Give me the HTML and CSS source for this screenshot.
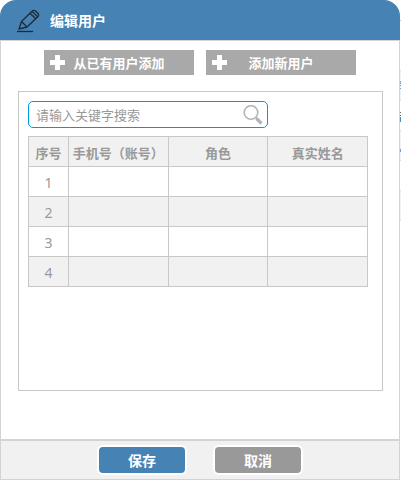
FILE: index.html
```html
<!DOCTYPE html>
<html lang="zh-CN">
<head>
<meta charset="utf-8">
<meta name="viewport" content="width=device-width, initial-scale=1">
<title>编辑用户</title>
<link rel="stylesheet" href="styles.css">
</head>
<body>
<form class="dialog" role="dialog" aria-labelledby="dialog-title">
  <header class="dialog-header">
    <svg class="pencil" viewBox="0 0 24 24" aria-hidden="true">
      <path d="M3 20 L5.500 12.500 L16.500 1.800 Q18 .8 19.500 2 L22 4.500 Q23.200 6 22 7.500 L11 18 Z M5.500 12.500 L11 18 M14 4.200 L19.700 9.700 M16 2.300 L21.600 7.900"/>
      <path d="M1 22.500 H17"/>
    </svg>
    <h1 id="dialog-title" class="dialog-title">编辑用户</h1>
  </header>
  <main class="dialog-body">
    <div class="add-actions">
      <button type="button" class="add-button">
        <svg class="plus" viewBox="0 0 15 15" aria-hidden="true"><path d="M5 0h5v5h5v5h-5v5H5v-5H0V5h5z"/></svg>
        <span class="add-label">从已有用户添加</span>
      </button>
      <button type="button" class="add-button">
        <svg class="plus" viewBox="0 0 15 15" aria-hidden="true"><path d="M5 0h5v5h5v5h-5v5H5v-5H0V5h5z"/></svg>
        <span class="add-label">添加新用户</span>
      </button>
    </div>
    <section class="panel">
      <div class="search">
        <input class="search-input" type="text" aria-label="请输入关键字搜索" placeholder="请输入关键字搜索">
        <button type="button" class="search-button" aria-label="搜索">
          <svg class="search-icon" viewBox="0 0 20 20" aria-hidden="true">
            <circle cx="8" cy="7.500" r="6.800"/>
            <path class="neck" d="M12.500 12 L14.500 14"/>
            <path class="handle" d="M13.500 13.500 L18.500 18.500"/>
          </svg>
        </button>
      </div>
      <table class="users">
        <colgroup><col class="col-index"><col><col><col></colgroup>
        <thead>
          <tr><th>序号</th><th>手机号（账号）</th><th>角色</th><th>真实姓名</th></tr>
        </thead>
        <tbody>
          <tr><td>1</td><td></td><td></td><td></td></tr>
          <tr><td>2</td><td></td><td></td><td></td></tr>
          <tr><td>3</td><td></td><td></td><td></td></tr>
          <tr><td>4</td><td></td><td></td><td></td></tr>
        </tbody>
      </table>
    </section>
  </main>
  <footer class="dialog-footer">
    <button type="button" class="button button-primary">保存</button>
    <button type="button" class="button">取消</button>
  </footer>
</form>
</body>
</html>
```

FILE: styles.css
```css
* {
  box-sizing: border-box;
}

body {
  margin: 0;
  padding: 0 1px 1px 0;
  min-height: 100vh;
  display: flex;
  /* edge of the striped list that lies behind the dialog */
  background: #fff linear-gradient(
    #fff 20px, #b4c8d8 20px 21px, #fff 21px 70px,
    #ddd 70px 71px, #f2f2f2 71px 81px, #7fb2da 81px 84px,
    #f2f2f2 84px 85px, #8496c0 85px 86px, #f2f2f2 86px 88px, #8496c0 88px 89px,
    #f2f2f2 89px 100px, #ddd 100px 101px, #fff 101px 112px,
    #666 112px 113px, #fff 113px 115px, #666 115px 116px, #fff 116px 117px,
    #4a8fc4 117px 122px, #fff 122px 130px, #ddd 130px 131px,
    #f2f2f2 131px 149px, #6fa3dc 149px 152px, #f2f2f2 152px 160px,
    #ddd 160px 161px, #fff 161px 190px, #ddd 190px 191px,
    #f2f2f2 191px 220px, #ddd 220px 221px, #fff 221px
  ) right top / 1px 100% no-repeat;
  color: #999;
  font-family: "Noto Sans", "Noto Sans CJK SC", sans-serif;
  font-size: 13px;
  line-height: 20px;
}

button,
input {
  font: inherit;
}

.dialog {
  flex: 1;
  display: flex;
  flex-direction: column;
}

.dialog-header {
  display: flex;
  align-items: center;
  gap: 10px;
  height: 40px;
  padding: 2px 16px 0;
  border-radius: 16px 16px 0 0;
  background: #4682b4;
}

.pencil {
  width: 24px;
  height: 24px;
  fill: none;
  stroke: #1d2a36;
  stroke-width: 1.3;
  stroke-linejoin: round;
}

.dialog-title {
  margin: 0;
  color: #fff;
  font-size: 14px;
  font-weight: 700;
}

.dialog-body {
  flex: 1;
  display: flex;
  flex-direction: column;
  padding: 9px 16px 48px 17px;
  border: 1px solid #d3d3d3;
  border-bottom: 0;
  background: #fff;
}

.add-actions {
  display: flex;
  gap: 12px;
  padding: 0 27px 0 26px;
}

.add-button {
  flex: 1;
  display: flex;
  align-items: center;
  height: 25px;
  padding: 0 21px 0 6px;
  border: 0;
  background: #a9a9a9;
  color: #fff;
  font-weight: 700;
}

.plus {
  width: 15px;
  height: 15px;
  fill: #fff;
}

.add-label {
  flex: 1;
  text-align: center;
}

.panel {
  flex: 1;
  margin-top: 16px;
  padding: 9px;
  border: 1px solid #c8c8c8;
}

.search {
  display: flex;
  align-items: center;
  width: 240px;
  height: 27px;
  padding: 0 4px 0 7px;
  border: 1px solid #0099dd;
  border-radius: 5px;
}

.search-input {
  flex: 1;
  min-width: 0;
  padding: 0;
  border: 0;
  outline: 0;
  background: none;
  color: #999;
}

.search-input::placeholder {
  color: #999;
}

.search-button {
  display: flex;
  padding: 0;
  border: 0;
  background: none;
}

.search-icon {
  width: 20px;
  height: 20px;
  fill: none;
  stroke: #b5b5b5;
  stroke-width: 1.6;
}

.search-icon .handle {
  stroke-width: 3.4;
}

.users {
  width: calc(100% - 5px);
  margin-top: 8px;
  border-collapse: collapse;
  table-layout: fixed;
}

.col-index {
  width: 40px;
}

.users th,
.users td {
  height: 30px;
  padding: 3px 0 0;
  border: 1px solid #c8c8c8;
  text-align: center;
  white-space: nowrap;
}

.users td {
  font-size: 14px;
}

.users th,
.users tr:nth-child(even) td {
  background: #f1f1f1;
}

.dialog-footer {
  display: flex;
  justify-content: center;
  gap: 26px;
  padding: 4px;
  border: 1px solid #d3d3d3;
  border-top-width: 2px;
  background: #f1f1f1;
}

.button {
  width: 90px;
  height: 30px;
  padding: 2px 0 0;
  border: 2px solid #fff;
  border-radius: 6px;
  background: #999;
  color: #fff;
  font-size: 14px;
  font-weight: 700;
  line-height: 20px;
}

.button-primary {
  background: #4682b4;
}
```
